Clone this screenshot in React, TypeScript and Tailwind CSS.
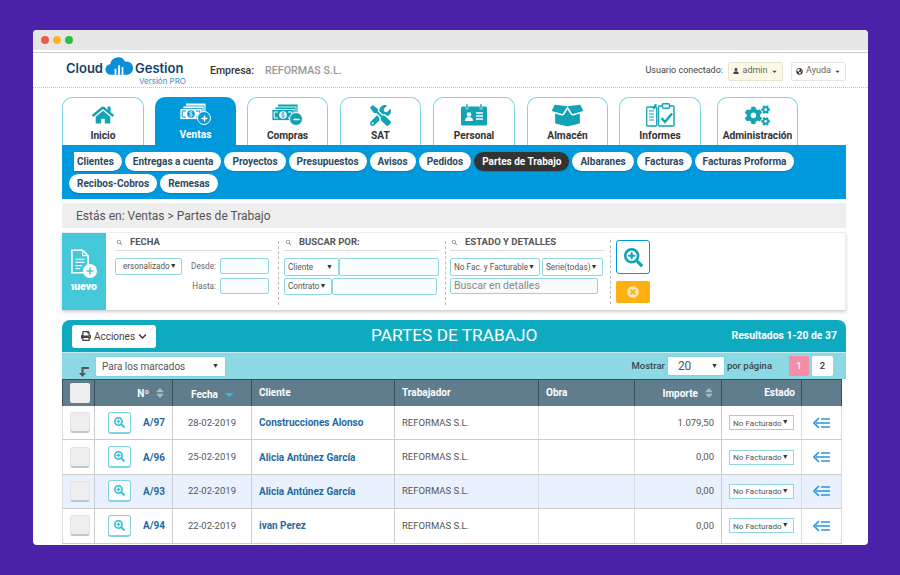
import React from "react";
import { FaHome, FaTools, FaBoxOpen, FaCogs, FaPrint, FaChevronDown, FaUser, FaGlobeAmericas, FaSearchPlus, FaTimesCircle, FaCaretDown, FaSearch, FaPlus, FaMinus, FaSortUp, FaSortDown } from "react-icons/fa";

const Money = ({ badge, color, inner }: { badge: "plus" | "minus"; color: string; inner: string }) => (
  <span className="relative block w-[31px] h-[22px] mx-auto">
    <svg width="26" height="17" viewBox="0 0 26 17" className="block">
      <rect x="6" y="0.500" width="19.500" height="10" fill={color} />
      <rect x="3" y="3" width="21" height="10" fill={color} stroke={inner} strokeWidth=".8" />
      <rect x="0" y="5.500" width="22" height="11" fill={color} stroke={inner} strokeWidth=".8" />
      <circle cx="11" cy="11" r="3.800" fill={inner} />
      <path d="M12.600 9.300c-1.500-1-3.400-.3-3.100.8.300 1.100 3 .7 3.100 1.900.1 1.200-2 1.600-3.300.6M11 7.800v6.400" fill="none" stroke={color} strokeWidth=".7" />
      <path d="M6 8H2.200v6H6M16 8h3.800v6H16" fill="none" stroke={inner} strokeWidth="1" />
    </svg>
    <span className={`absolute right-0 bottom-0 w-[14px] h-[14px] rounded-full flex items-center justify-center border border-white ${badge === "plus" ? "bg-[#0b9bd9]" : "bg-[#12a3b4]"}`}>
      {badge === "plus" ? <FaPlus className="text-white text-[7px]" /> : <FaMinus className="text-white text-[7px]" />}
    </span>
  </span>
);

const IdCard = () => (
  <svg width="26" height="22" viewBox="0 0 26 22">
    <rect x="0" y="2.500" width="26" height="19" rx="1.500" fill="#12a3b4" />
    <rect x="5" y="0" width="2" height="5" fill="#12a3b4" stroke="#fff" strokeWidth=".5" />
    <rect x="19" y="0" width="2" height="5" fill="#12a3b4" stroke="#fff" strokeWidth=".5" />
    <circle cx="8" cy="10.500" r="2.300" fill="#fff" />
    <path d="M4 17c0-3 1.800-4 4-4s4 1 4 4z" fill="#fff" />
    <path d="M15 9h7M15 12h7M15 15h7" stroke="#fff" strokeWidth="1.400" />
  </svg>
);

const Reports = () => (
  <svg width="29" height="24" viewBox="0 0 29 24">
    <rect x="0.700" y="4" width="10" height="19" rx="1" fill="none" stroke="#12a3b4" strokeWidth="1.300" />
    <path d="M3 8h5M3 11h5M3 14h5M3 17h5" stroke="#12a3b4" strokeWidth="1.200" />
    <path d="M6.500 6 9 .8l2 1-2.500 4.800z" fill="#12a3b4" />
    <rect x="12.500" y="3" width="15.500" height="20" rx="1" fill="#fff" stroke="#12a3b4" strokeWidth="1.500" />
    <rect x="16.500" y=".8" width="7" height="4.500" rx="1" fill="#fff" stroke="#12a3b4" strokeWidth="1.400" />
    <path d="m15.500 15 3.500 4 7-8.500" fill="none" stroke="#12a3b4" strokeWidth="2.400" />
  </svg>
);

const tabs = [
  { label: "Inicio", w: "w-[82px]", icon: <FaHome className="text-[#12a3b4] text-[22px]" /> },
  { label: "Ventas", w: "w-[81px] ml-[11px]", active: true, icon: <Money badge="plus" color="#fff" inner="#0099dc" /> },
  { label: "Compras", w: "w-[81px] ml-[11px]", icon: <Money badge="minus" color="#12a3b4" inner="#fff" /> },
  { label: "SAT", w: "w-[81px] ml-[12px]", icon: <FaTools className="text-[#12a3b4] text-[21px]" /> },
  { label: "Personal", w: "w-[82px] ml-[12px]", icon: <IdCard /> },
  { label: "Almacén", w: "w-[81px] ml-[12px]", icon: <FaBoxOpen className="text-[#12a3b4] text-[31px]" /> },
  { label: "Informes", w: "w-[82px] ml-[11px]", icon: <Reports /> },
  { label: "Administración", w: "w-[81px] ml-[16px]", icon: <FaCogs className="text-[#12a3b4] text-[25px]" /> },
];

const subs = ["Clientes", "Entregas a cuenta", "Proyectos", "Presupuestos", "Avisos", "Pedidos", "Partes de Trabajo", "Albaranes", "Facturas", "Facturas Proforma", "Recibos-Cobros", "Remesas"];

const rows = [
  { n: "A/97", f: "28-02-2019", c: "Construcciones Alonso", i: "1.079,50" },
  { n: "A/96", f: "25-02-2019", c: "Alicia Antúnez García", i: "0,00" },
  { n: "A/93", f: "22-02-2019", c: "Alicia Antúnez García", i: "0,00", hl: true },
  { n: "A/94", f: "22-02-2019", c: "ivan Perez", i: "0,00" },
];

const Caret = () => <span className="text-[7px] text-[#333] leading-none">▼</span>;

const Sort = () => (
  <span className="relative inline-block w-[10px] h-[12px] ml-[5px] text-[#a9b8c0] text-[12px]">
    <FaSortUp className="absolute left-0 top-0" />
    <FaSortDown className="absolute left-0 top-0" />
  </span>
);

const SmallSelect = ({ children, className }: { children: React.ReactNode; className: string }) => (
  <div className={`border border-[#8fd8e3] rounded-[2px] bg-white flex items-center justify-between pl-[3px] pr-[5px] text-[8.200px] text-[#555] ${className}`}>{children}</div>
);

const SectionTitle = ({ children }: { children: React.ReactNode }) => (
  <div className="h-[18px] pt-[1px] border-b border-[#ddd] flex items-center pl-[2px] gap-[8px] text-[9.500px] font-bold text-[#555]">
    <FaSearch className="text-[5px] text-[#888]" />
    {children}
  </div>
);

const Divider = () => <div className="h-[64px] border-l border-dashed border-[#bbb]" />;

const Input = ({ className }: { className: string }) => (
  <div className={`border border-[#8fd8e3] rounded-[2px] bg-[#f9fdfe] ${className}`} />
);

const gridCols = "grid grid-cols-[32px_78px_79px_143px_144px_96px_87px_80px_41px] w-[780px]";

export default function App() {
  return (
    <div className="h-[575px] overflow-hidden bg-[#4b23a8] pt-[30px] px-[33px] font-['Roboto',sans-serif]">
      <div className="w-[835px] h-[515px] overflow-hidden rounded-[4px] bg-white">
        <div className="h-[20px] bg-[#e6e6e6] flex items-center gap-[4px] pl-[8px]">
          <span className="w-[8px] h-[8px] rounded-full bg-[#f4574e]" />
          <span className="w-[8px] h-[8px] rounded-full bg-[#fbb430]" />
          <span className="w-[8px] h-[8px] rounded-full bg-[#2bbf45]" />
        </div>
        <div className="h-[2px] bg-white" />
        <div className="h-px bg-[#ccc]" />

        {/* header */}
        <div className="h-[35px] pt-[2px] border-b border-dotted border-[#8fd8e3] flex items-center pl-[33px] pr-[22px]">
          <div className="relative w-[120px] h-[30px]">
            <div className="absolute left-0 top-[6px] flex items-center text-[13px] font-semibold text-[#123f6d] font-['Inter',sans-serif] leading-none">
              <span>Cloud</span>
              <svg width="28" height="18" viewBox="0 0 32 20" className="mx-[2px] -mt-[5px]">
                <path d="M7 20a6 6 0 0 1-1-12 9 9 0 0 1 17-3 7 7 0 0 1 3 15z" fill="#0b8fd6" />
                <path d="M11 20v-7h2v7zM15 20V9h2v11zM19 20v-9h2v9z" fill="#fff" />
              </svg>
              <span>Gestion</span>
            </div>
            <div className="absolute right-0 top-[21px] text-[8px] text-[#3a8fc8] leading-none font-['Inter',sans-serif]">Versión PRO</div>
          </div>
          <span className="ml-[24px] text-[10.500px] font-medium text-[#333]">Empresa:</span>
          <span className="ml-[11px] text-[10.700px] font-medium text-[#999]">REFORMAS S.L.</span>
          <span className="ml-auto text-[9px] text-[#444]">Usuario conectado:</span>
          <div className="ml-[5px] w-[55px] h-[19px] bg-[#fdf8e3] border border-[#e8e3cc] rounded-[2px] flex items-center justify-center gap-[3px] text-[9px] text-[#666]">
            <FaUser className="text-[6px] text-[#444]" />admin<FaCaretDown className="text-[7px] text-[#444]" />
          </div>
          <div className="ml-[8px] w-[55px] h-[19px] bg-white border border-[#e5e5e5] rounded-[2px] flex items-center justify-center gap-[3px] text-[9px] text-[#666]">
            <FaGlobeAmericas className="text-[7px] text-[#444]" />Ayuda<FaCaretDown className="text-[7px] text-[#444]" />
          </div>
        </div>

        <div className="pl-[29px] pr-[22px]">
          {/* tabs */}
          <div className="flex pt-[9px] h-[57px]">
            {tabs.map((t) => (
              <div key={t.label} className={`${t.w} h-[48px] shrink-0 rounded-t-[10px] flex flex-col items-center ${t.active ? "bg-[#0099dc] text-white" : "border border-b-0 border-[#7fd3e2] bg-white text-[#333]"}`}>
                <div className="h-[31px] flex items-center justify-center w-full pt-[3px]">{t.icon}</div>
                <div className="text-[10.200px] font-bold leading-[14px] whitespace-nowrap">{t.label}</div>
              </div>
            ))}
          </div>

          {/* sub nav */}
          <div className="h-[54px] bg-[#0099dc] pl-[7px] pr-[8px] pt-[7px] flex flex-wrap content-start gap-x-[3px] gap-y-[3px]">
            {subs.map((s) => {
              const dark = s === "Partes de Trabajo";
              const first = s === "Clientes";
              return (
                <div key={s} className={`h-[19px] px-[8px] rounded-full flex items-center text-[10px] font-bold leading-none whitespace-nowrap shadow-[0_1px_1px_rgba(0,0,0,.15)] ${dark ? "bg-[#333] text-white" : "bg-white text-[#2b4a5e]"} ${first ? "pl-[3px] ml-[5px] rounded-l-none" : ""}`}>{s}</div>
              );
            })}
          </div>

          {/* breadcrumb */}
          <div className="mt-[4px] h-[25px] bg-[#eeeeee] pl-[14px] flex items-center text-[12px] text-[#555]">Estás en: Ventas &gt; Partes de Trabajo</div>

          {/* filter */}
          <div className="mt-[4px] h-[78px] flex bg-white shadow-[0_2px_3px_rgba(0,0,0,.2)] border-t border-r border-[#eee]">
            <div className="w-[44px] shrink-0 bg-[#45c8d9] flex flex-col items-center overflow-hidden text-white">
              <div className="relative mt-[15px] w-[26px] h-[30px]">
                <svg width="18" height="27" viewBox="0 0 20 27">
                  <path d="M1 1h12l6 6v19H1z" fill="none" stroke="#fff" strokeWidth="1.800" />
                  <path d="M13 1v6h6M5 11h10M5 14.500h10M5 18h7M5 21.500h5" fill="none" stroke="#fff" strokeWidth="1.300" />
                </svg>
                <span className="absolute right-0 bottom-0 w-[14px] h-[14px] rounded-full bg-white flex items-center justify-center">
                  <FaPlus className="text-[#45c8d9] text-[8px]" />
                </span>
              </div>
              <div className="w-[26px] mt-[4px] overflow-hidden text-[10.500px] font-black leading-none flex justify-end whitespace-nowrap"><span className="shrink-0">nuevo</span></div>
            </div>

            <div className="w-[157px] ml-[9px] shrink-0">
              <SectionTitle>FECHA</SectionTitle>
              <div className="flex justify-between mt-[7px] pr-[3px]">
                <SmallSelect className="w-[67px] h-[17px] overflow-hidden"><span className="whitespace-nowrap ml-[4px]">ersonalizado</span><Caret /></SmallSelect>
                <div className="text-[8.200px] text-[#666] flex flex-col gap-[4px] items-end w-[78px]">
                  <div className="flex items-center gap-[4px]">Desde:<Input className="w-[49px] h-[16px]" /></div>
                  <div className="flex items-center gap-[4px]">Hasta:<Input className="w-[49px] h-[16px]" /></div>
                </div>
              </div>
            </div>
            <div className="w-[6px] ml-[6px] pt-[8px] shrink-0"><Divider /></div>

            <div className="w-[155px] shrink-0">
              <SectionTitle>BUSCAR POR:</SectionTitle>
              <div className="mt-[7px] flex">
                <SmallSelect className="w-[55px] h-[18px]"><span>Cliente</span><Caret /></SmallSelect>
                <Input className="w-[100px] h-[18px]" />
              </div>
              <div className="mt-[2px] flex">
                <SmallSelect className="w-[48px] h-[17px]"><span>Contrato</span><Caret /></SmallSelect>
                <Input className="w-[105px] h-[17px]" />
              </div>
            </div>
            <div className="w-[5px] ml-[6px] pt-[8px] shrink-0"><Divider /></div>

            <div className="w-[155px] shrink-0">
              <SectionTitle>ESTADO Y DETALLES</SectionTitle>
              <div className="mt-[7px] flex gap-[2px]">
                <SmallSelect className="w-[90px] h-[18px]"><span className="whitespace-nowrap">No Fac. y Facturable</span><Caret /></SmallSelect>
                <SmallSelect className="w-[61px] h-[18px]"><span className="whitespace-nowrap">Serie(todas)</span><Caret /></SmallSelect>
              </div>
              <div className="mt-[2px] w-[148px] h-[16px] border border-[#8fd8e3] rounded-[2px] bg-[#fafafa] px-[3px] flex items-center text-[10.500px] text-[#888]">Buscar en detalles</div>
            </div>
            <div className="w-[6px] ml-[5px] pt-[7px] shrink-0"><Divider /></div>

            <div className="pt-[7px] shrink-0">
              <div className="w-[34px] h-[34px] border border-[#0099dc] rounded-[3px] flex items-center justify-center bg-white">
                <FaSearchPlus className="text-[#12a3b4] text-[19px]" />
              </div>
              <div className="mt-[7px] w-[34px] h-[22px] bg-[#fdb00f] rounded-[2px] flex items-center justify-center">
                <FaTimesCircle className="text-[#fde8b8] text-[12px]" />
              </div>
            </div>
          </div>

          {/* title bar */}
          <div className="mt-[10px] h-[32px] bg-[#0eaac0] rounded-t-[8px] flex items-center relative pl-[10px] pr-[9px] text-white">
            <div className="w-[84px] h-[23px] bg-white rounded-[3px] flex items-center justify-center gap-[3px] text-[10px] text-[#444]">
              <FaPrint className="text-[10px]" />Acciones<FaChevronDown className="text-[9px] text-[#333]" />
            </div>
            <div className="absolute left-[309px] text-[17.300px] leading-none">PARTES DE TRABAJO</div>
            <div className="ml-auto text-[10.400px] font-bold">Resultados 1-20 de 37</div>
          </div>

          {/* toolbar */}
          <div className="h-[27px] bg-[#8cd9e3] border-t border-[#c3edf2] flex items-center pl-[17px] pr-[13px] text-[9.500px] text-[#37474f]">
            <svg width="10" height="10" viewBox="0 0 10 10" className="mt-[12px] shrink-0">
              <path d="M10 0H2.500v6H0l3.500 4L7 6H4.500V2H10z" fill="#555" />
            </svg>
            <div className="ml-[6px] w-[131px] h-[21px] bg-white border border-[#7fd3e2] rounded-[2px] flex items-center justify-between pl-[6px] pr-[6px] text-[10px] text-[#555]"><span>Para los marcados</span><Caret /></div>
            <span className="ml-auto font-medium">Mostrar</span>
            <div className="ml-[2px] w-[58px] h-[20px] bg-white border border-[#7fd3e2] rounded-[2px] flex items-center justify-between px-[10px] pr-[6px] text-[12px] text-[#555]"><span>20</span><Caret /></div>
            <span className="ml-[2px] font-medium">por página</span>
            <div className="ml-[17px] w-[20px] h-[20px] bg-[#f78ca8] rounded-[2px] flex items-center justify-center text-white font-medium">1</div>
            <div className="ml-[3px] w-[21px] h-[20px] bg-white rounded-[2px] flex items-center justify-center text-[#333] font-medium">2</div>
          </div>

          {/* table */}
          <div>
            <div className={`${gridCols} h-[27px] bg-[#5f7d8c] text-white text-[10px] font-bold border-t border-[#37505c]`}>
              <div className="flex items-center pl-[7px] border-l border-[#37505c]"><div className="w-[20px] h-[20px] bg-[#eeeeee] rounded-[2px]" /></div>
              <div className="flex items-center justify-end pr-[8px] border-l border-[#37505c]">Nº<Sort /></div>
              <div className="flex items-center justify-center pl-[3px] border-l border-[#37505c] pt-[2px]">Fecha<FaCaretDown className="ml-[5px] text-[#3db4e8] text-[13px]" /></div>
              <div className="pl-[7px] pt-[5px] border-l border-[#37505c]">Cliente</div>
              <div className="pl-[7px] pt-[5px] border-l border-[#37505c]">Trabajador</div>
              <div className="pl-[7px] pt-[5px] border-l border-[#37505c]">Obra</div>
              <div className="flex items-center justify-end pr-[8px] border-l border-[#37505c]">Importe<Sort /></div>
              <div className="text-right pr-[6px] pt-[5px] border-l border-[#37505c]">Estado</div>
              <div className="border-l border-r border-[#37505c]" />
            </div>
            {rows.map((r) => (
              <div key={r.n} className={`${gridCols} h-[34.400px] text-[9.500px] text-[#555] border-b border-[#ccc] ${r.hl ? "bg-[#e8f1fd]" : "bg-white"}`}>
                <div className="flex items-center pl-[7px] border-l border-[#ddd]"><div className="w-[20px] h-[21px] bg-[#eeeeee] rounded-[3px] border border-[#e2e2e2] border-b-2 border-b-[#b9c9cf]" /></div>
                <div className="flex items-center justify-between pl-[13px] pr-[7px] border-l border-[#ccc]">
                  <div className="w-[23px] h-[22px] bg-white border border-[#7fd3e2] border-b-2 rounded-[3px] flex items-center justify-center"><FaSearchPlus className="text-[#35bccf] text-[11px]" /></div>
                  <span className="text-[10px] font-bold text-[#1f6a9e]">{r.n}</span>
                </div>
                <div className="flex items-center justify-center border-l border-[#ccc]">{r.f}</div>
                <div className="flex items-center pl-[7px] border-l border-[#ccc] text-[10px] font-bold text-[#1f6a9e] whitespace-nowrap">{r.c}</div>
                <div className="flex items-center pl-[7px] border-l border-[#ccc]">REFORMAS S.L.</div>
                <div className="border-l border-[#ddd]" />
                <div className="flex items-center justify-end pr-[7px] border-l border-[#ddd]">{r.i}</div>
                <div className="flex items-center justify-center border-l border-[#ccc]">
                  <div className="w-[65px] h-[15px] border border-[#8fd8e3] bg-white flex items-center justify-between pl-[3px] pr-[5px] text-[8.100px] whitespace-nowrap"><span>No Facturado</span><Caret /></div>
                </div>
                <div className="flex flex-col items-center justify-center border-l border-r border-[#ddd]">
                  <svg width="17" height="12" viewBox="0 0 17 12" fill="none" stroke="#2a96d8" strokeWidth="1.700"><path d="M6 1 1 6l5 5M3 6h14M8 2h9M8 10h9" /></svg>
                </div>
              </div>
            ))}
          </div>
        </div>
      </div>
    </div>
  );
}
